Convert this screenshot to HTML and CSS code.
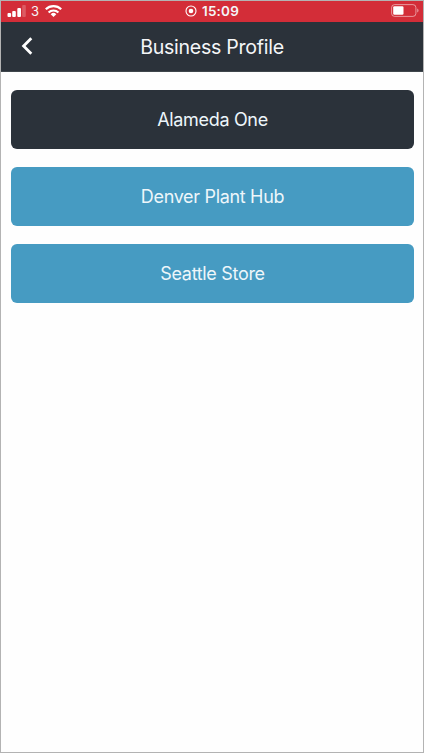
FILE: index.html
```html
<!DOCTYPE html>
<html lang="en">
<head>
<meta charset="utf-8">
<title>Business Profile</title>
<link rel="stylesheet" href="styles.css">
</head>
<body>
<div class="screen">
  <div class="status">
    <div class="status-left">
      <svg class="signal" width="19" height="12" viewBox="0 0 19 12" fill="#fff">
        <rect x=".5" y="8" width="3.6" height="4" rx="1"/>
        <rect x="5.2" y="6" width="3.6" height="6" rx="1"/>
        <rect x="10.3" y="3" width="3.7" height="9" rx="1"/>
        <rect x="15.2" y="0" width="3.6" height="12" rx="1" opacity=".22"/>
      </svg>
      <span class="carrier">3</span>
      <svg class="wifi" width="17" height="12" viewBox="0 0 17 12" fill="none" stroke="#fff" stroke-width="2.2">
        <path d="M.8 4.3a11 11 0 0 1 15.4 0"/>
        <path d="M3.6 7.5a7 7 0 0 1 9.8 0"/>
        <path d="M8.5 12 5.7 9.2a4 4 0 0 1 5.6 0z" fill="#fff" stroke="none"/>
      </svg>
    </div>
    <div class="status-center">
      <svg width="12" height="12" viewBox="0 0 12 12">
        <circle cx="6" cy="6" r="5" fill="none" stroke="#fff" stroke-width="1.1"/>
        <circle cx="6" cy="6" r="2.3" fill="#fff"/>
      </svg>
      <span class="time">15:09</span>
    </div>
    <svg class="battery" width="28" height="13" viewBox="0 0 28 13">
      <rect x=".6" y=".6" width="24.3" height="11.8" rx="3" fill="none" stroke="#fff" stroke-opacity=".5"/>
      <rect x="2.2" y="2.2" width="10.3" height="8.6" rx="1.2" fill="#fff"/>
      <path d="M26.2 4.5c1.8.6 1.8 3.4 0 4z" fill="#fff" fill-opacity=".5"/>
    </svg>
  </div>
  <header class="header">
    <svg class="back" width="12" height="18" viewBox="0 0 12 18" fill="none" stroke="#fff" stroke-width="2.8">
      <path d="M10.3 1.2 2.6 9l7.7 7.8"/>
    </svg>
    <h1 class="title">Business Profile</h1>
  </header>
  <main class="list">
    <button class="item item-active">Alameda One</button>
    <button class="item">Denver Plant Hub</button>
    <button class="item">Seattle Store</button>
  </main>
</div>
</body>
</html>
```
FILE: styles.css
```css
* { box-sizing: border-box; }
body {
  margin: 0;
  font-family: Inter, "Liberation Sans", sans-serif;
  color: #f4f6f8;
}
.screen {
  height: 753px;
  border: 1px solid #b3b3b3;
  background: #fefefe;
}
.status {
  display: grid;
  grid-template-columns: 1fr auto 1fr;
  align-items: center;
  height: 21px;
  padding: 0 4px 1px 6px;
  background: #d32d38;
}
.status svg { display: block; }
.status-left, .status-center { display: flex; align-items: center; }
.signal { margin-top: -1px; }
.carrier { width: 8px; margin: 0 6px 0 5px; font-size: 13px; line-height: 20px; }
.wifi { margin-top: -1px; }
.status-center { gap: 5px; margin-right: 2px; }
.time { font-size: 13.5px; font-weight: 600; line-height: 20px; letter-spacing: .2px; }
.battery { justify-self: end; margin-top: -1px; }
.header {
  display: grid;
  grid-template-columns: 40px 1fr 40px;
  align-items: center;
  height: 50px;
  background: #2b323a;
  border-bottom: 1px solid #3f464c;
}
.back { margin-left: 20px; margin-top: -1px; }
.title {
  margin: 0;
  font-size: 19.6px;
  font-weight: 400;
  line-height: 26px;
  letter-spacing: -.28px;
  text-align: center;
  white-space: nowrap;
}
.list {
  display: flex;
  flex-direction: column;
  gap: 18px;
  padding: 18px 9px 0 10px;
}
.item {
  height: 59px;
  padding: 0;
  border: 0;
  border-radius: 6px;
  background: #469bc2;
  color: #edf6fa;
  font: 400 18px/24px Inter, "Liberation Sans", sans-serif;
  letter-spacing: -.32px;
}
.item-active { background: #2b323a; }
```
